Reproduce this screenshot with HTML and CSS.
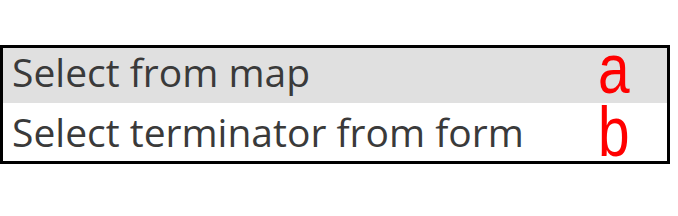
FILE: index.html
```html
<!DOCTYPE html>
<html lang="en">
  <head>
    <meta charset="UTF-8" />
    <title>Select menu</title>
    <link rel="stylesheet" href="styles.css">
  </head>
  <body>
    <div class="menu">
      <div class="menu-item active">
        <span class="item-label">Select from map</span>
        <span class="item-key">a</span>
      </div>
      <div class="menu-item">
        <span class="item-label">Select terminator from form</span>
        <span class="item-key">b</span>
      </div>
    </div>
  </body>
</html>
```

FILE: styles.css
```css
body {
  margin: 0;
  background-color: #fff;
  font-family: 'Open Sans', sans-serif;
}
.menu {
  width: 664px;
  margin-top: 45px;
  border: 3px solid #000;
}
.menu-item {
  display: flex;
  align-items: center;
  justify-content: space-between;
  height: 55px;
  padding: 0 34px 0 9px;
}
.menu-item + .menu-item {
  height: 58px;
}
.menu-item.active {
  background-color: #e0e0e0;
  padding-bottom: 8px;
  height: 47px;
}
.item-label {
  font-size: 39px;
  color: #3a3a3a;
  line-height: 44px;
}
.item-key {
  font-family: 'Liberation Sans', sans-serif;
  font-size: 71px;
  color: #ff0000;
  line-height: 36px;
  transform: scaleX(0.8);
}
.active .item-key {
  margin-bottom: 6px;
}
```
